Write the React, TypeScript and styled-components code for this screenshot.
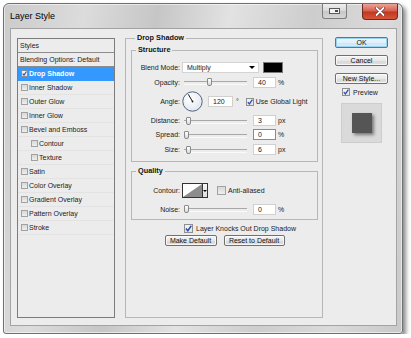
import styled, { createGlobalStyle } from 'styled-components';

const GlobalStyle = createGlobalStyle`
  html, body { margin: 0; padding: 0; background: #fff; }
  body {
    font-family: "Liberation Sans", Arial, sans-serif;
    font-size: 7px;
    color: #1b1b1b;
  }
  * { box-sizing: border-box; }
`;

const styleItems = [
  { label: 'Drop Shadow', checked: true, selected: true },
  { label: 'Inner Shadow' },
  { label: 'Outer Glow' },
  { label: 'Inner Glow' },
  { label: 'Bevel and Emboss' },
  { label: 'Contour', indent: true },
  { label: 'Texture', indent: true },
  { label: 'Satin' },
  { label: 'Color Overlay' },
  { label: 'Gradient Overlay' },
  { label: 'Pattern Overlay' },
  { label: 'Stroke' },
];

function Check({ checked, size = 8 }: { checked?: boolean; size?: number }) {
  return (
    <S.CheckBox $size={size} $checked={checked}>
      {checked && (
        <svg width={size - 2} height={size - 2} viewBox="0 0 6 6">
          <path d="M0.8 3.1 L2.4 4.9 L5.4 0.6" fill="none" stroke="#2b4fae" strokeWidth="1.3" />
        </svg>
      )}
    </S.CheckBox>
  );
}

function Slider({ pos }: { pos: number }) {
  return (
    <S.Slider>
      <S.Thumb style={{ left: pos }} />
    </S.Slider>
  );
}

function Dial() {
  return (
    <svg width="21" height="21" viewBox="0 0 21 21">
      <defs>
        <radialGradient id="dialBg" cx="0.4" cy="0.35" r="0.7">
          <stop offset="0" stopColor="#ffffff" />
          <stop offset="1" stopColor="#e1e7ef" />
        </radialGradient>
      </defs>
      <circle cx="10.5" cy="10.5" r="9.7" fill="url(#dialBg)" stroke="#53627f" strokeWidth="1" />
      <line x1="10.5" y1="10.5" x2="6.3" y2="3.3" stroke="#1a1a1a" strokeWidth="1" />
      <circle cx="10.5" cy="10.5" r="0.9" fill="#1a1a1a" />
    </svg>
  );
}

export default function App() {
  return (
    <>
      <GlobalStyle />
      <S.Window>
        <S.TitleBar>
          <S.Title>Layer Style</S.Title>
          <S.MinButton>
            <svg width="11" height="6" viewBox="0 0 11 6">
              <rect x="0.5" y="0.5" width="10" height="5" fill="#f4f4f4" stroke="#5a5a5a" />
              <rect x="6" y="2" width="3" height="2" fill="#4a4a4a" />
            </svg>
          </S.MinButton>
          <S.CloseButton>
            <svg width="10" height="9" viewBox="0 0 10 9">
              <path d="M1.5 1 L8.5 8 M8.5 1 L1.5 8" stroke="#5c1d14" strokeWidth="3" strokeLinecap="round" />
              <path d="M1.5 1 L8.5 8 M8.5 1 L1.5 8" stroke="#ffffff" strokeWidth="1.8" strokeLinecap="round" />
            </svg>
          </S.CloseButton>
        </S.TitleBar>

        <S.Client>
          <S.StylesList>
            <S.ListHeader>Styles</S.ListHeader>
            <S.ListHeader>Blending Options: Default</S.ListHeader>
            {styleItems.map((item) => (
              <S.ListRow key={item.label} $selected={item.selected} $indent={item.indent}>
                <Check checked={item.checked} size={7} />
                <span>{item.label}</span>
              </S.ListRow>
            ))}
          </S.StylesList>

          <S.GroupBox $pad="0 4px 0 5px" $top={-5}>
            <S.Legend>Drop Shadow</S.Legend>
            <S.GroupBox $pad="6px 0 3px 0" $top={2}>
              <S.Legend>Structure</S.Legend>
              <S.Row $h={13}>
                <S.Label>Blend Mode:</S.Label>
                <S.Select>
                  <span>Multiply</span>
                  <S.Arrow />
                </S.Select>
                <S.Swatch />
              </S.Row>
              <S.Row $h={16}>
                <S.Label>Opacity:</S.Label>
                <Slider pos={23} />
                <S.NumBox>40</S.NumBox>
                <S.Unit>%</S.Unit>
              </S.Row>
              <S.Row $h={23}>
                <S.Label>Angle:</S.Label>
                <S.DialWrap>
                  <Dial />
                </S.DialWrap>
                <S.NumBox $w={25} $gap={5}>120</S.NumBox>
                <S.Unit $gap={3}>°</S.Unit>
                <S.CheckLabel $gap={7}>
                  <Check checked />
                  <span>Use Global Light</span>
                </S.CheckLabel>
              </S.Row>
              <S.Row $h={15}>
                <S.Label>Distance:</S.Label>
                <Slider pos={2} />
                <S.NumBox>3</S.NumBox>
                <S.Unit>px</S.Unit>
              </S.Row>
              <S.Row $h={13}>
                <S.Label>Spread:</S.Label>
                <Slider pos={0} />
                <S.NumBox $focus>0</S.NumBox>
                <S.Unit>%</S.Unit>
              </S.Row>
              <S.Row $h={17}>
                <S.Label>Size:</S.Label>
                <Slider pos={2} />
                <S.NumBox>6</S.NumBox>
                <S.Unit>px</S.Unit>
              </S.Row>
            </S.GroupBox>

            <S.GroupBox $pad="5px 0 1px 0" $top={4}>
              <S.Legend>Quality</S.Legend>
              <S.Row $h={19}>
                <S.Label>Contour:</S.Label>
                <S.ContourPicker>
                  <svg width="19" height="13" viewBox="0 0 19 13">
                    <rect width="19" height="13" fill="#ffffff" />
                    <polygon points="0,13 19,0 19,13" fill="#8c8c8c" />
                  </svg>
                  <S.ContourDrop>
                    <S.Arrow $small />
                  </S.ContourDrop>
                </S.ContourPicker>
                <S.CheckLabel $gap={9}>
                  <Check size={9} />
                  <span>Anti-aliased</span>
                </S.CheckLabel>
              </S.Row>
              <S.Row $h={18}>
                <S.Label>Noise:</S.Label>
                <Slider pos={0} />
                <S.NumBox>0</S.NumBox>
                <S.Unit>%</S.Unit>
              </S.Row>
            </S.GroupBox>

            <S.KnockRow>
              <Check checked size={9} />
              <span>Layer Knocks Out Drop Shadow</span>
            </S.KnockRow>
            <S.ButtonRow>
              <S.Button $w={52}>Make Default</S.Button>
              <S.Button $w={61}>Reset to Default</S.Button>
            </S.ButtonRow>
          </S.GroupBox>

          <S.SideColumn>
            <S.Button $primary>OK</S.Button>
            <S.Button>Cancel</S.Button>
            <S.Button>New Style...</S.Button>
            <S.PreviewRow>
              <Check checked />
              <span>Preview</span>
            </S.PreviewRow>
            <S.PreviewBox>
              <S.PreviewSquare />
            </S.PreviewBox>
          </S.SideColumn>
        </S.Client>
      </S.Window>
    </>
  );
}

namespace S {
  export const Window = styled.div`
    margin: 3px 0 0 3px;
    width: 400px;
    height: 331px;
    border: 1px solid #707070;
    border-radius: 6px 6px 3px 3px;
    background: linear-gradient(100deg, #cbcbcb 0%, #dcdcdc 18%, #c6c6c6 34%, #e2e2e2 50%, #cdcdcd 68%, #dadada 84%, #c9c9c9 100%);
    box-shadow: 3px 3px 4px rgba(0, 0, 0, 0.45), inset 0 0 0 1px rgba(255, 255, 255, 0.55);
    padding: 0 5px 7px 6px;
    display: flex;
    flex-direction: column;
  `;

  export const TitleBar = styled.div`
    height: 24px;
    display: flex;
    align-items: flex-start;
    flex-shrink: 0;
  `;

  export const Title = styled.div`
    flex: 1;
    margin-top: 7px;
    font-size: 9px;
    line-height: 11px;
    color: #000;
  `;

  export const MinButton = styled.div`
    width: 25px;
    height: 15px;
    margin-right: 15px;
    border: 1px solid #7d7d7d;
    border-top: none;
    border-radius: 0 0 3px 3px;
    background: linear-gradient(#eeeeee, #d8d8d8 50%, #c7c7c7 51%, #d6d6d6);
    display: flex;
    align-items: center;
    justify-content: center;
  `;

  export const CloseButton = styled.div`
    width: 36px;
    height: 16px;
    margin-right: -1px;
    border: 1px solid #6b2a22;
    border-top: none;
    border-radius: 0 0 4px 4px;
    background: linear-gradient(#e9a597, #d7614f 45%, #c3371f 55%, #d7553d);
    display: flex;
    align-items: center;
    justify-content: center;
  `;

  export const Client = styled.div`
    flex: 1;
    background: #ececec;
    border: 1px solid #a3a3a3;
    padding: 9px 6px 7px 6px;
    display: grid;
    grid-template-columns: 98px 198px 55px;
    column-gap: 10px;
  `;

  export const StylesList = styled.div`
    border: 1px solid #7c7c7c;
    background: #ececec;
    display: flex;
    flex-direction: column;
  `;

  export const ListHeader = styled.div`
    height: 14px;
    line-height: 13px;
    padding-left: 2px;
    border-bottom: 1px solid #8c8c8c;
    color: #1b1b1b;
    white-space: nowrap;
  `;

  export const ListRow = styled.div<{ $selected?: boolean; $indent?: boolean }>`
    height: 14px;
    display: flex;
    align-items: center;
    gap: 1px;
    padding-left: ${(p) => (p.$indent ? 13 : 3)}px;
    border-bottom: 1px solid ${(p) => (p.$selected ? '#3399ff' : '#e3e3e3')};
    background: ${(p) => (p.$selected ? '#3399ff' : 'transparent')};
    color: ${(p) => (p.$selected ? '#fff' : '#1b1b1b')};
    font-weight: ${(p) => (p.$selected ? 'bold' : 'normal')};
    white-space: nowrap;
  `;

  export const CheckBox = styled.span<{ $size: number; $checked?: boolean }>`
    width: ${(p) => p.$size}px;
    height: ${(p) => p.$size}px;
    flex-shrink: 0;
    border: 1px solid ${(p) => (p.$checked ? '#8e8f8f' : '#a2a2a2')};
    background: ${(p) => (p.$checked ? 'linear-gradient(#f4f4f4, #e2e2e2)' : 'linear-gradient(#d8d8d8, #eeeeee)')};
    display: flex;
    align-items: center;
    justify-content: center;
  `;

  export const GroupBox = styled.fieldset<{ $pad: string; $top: number }>`
    margin: ${(p) => p.$top}px 0 0 0;
    min-width: 0;
    border: 1px solid #b7b7b7;
    padding: ${(p) => p.$pad};
    display: flex;
    flex-direction: column;
  `;

  export const Legend = styled.legend`
    font-weight: bold;
    font-size: 7.3px;
    line-height: 10px;
    padding: 0 2px;
    margin-left: 4px;
    color: #111;
  `;

  export const Row = styled.div<{ $h: number }>`
    height: ${(p) => p.$h}px;
    display: flex;
    align-items: center;
    white-space: nowrap;
  `;

  export const Label = styled.div`
    width: 48px;
    flex-shrink: 0;
    text-align: right;
    margin-right: 2px;
  `;

  export const Select = styled.div`
    width: 77px;
    height: 11px;
    background: #fff;
    border: 1px solid #d4d4d4;
    padding: 0 3px 0 4px;
    display: flex;
    align-items: center;
    justify-content: space-between;
  `;

  export const Arrow = styled.span<{ $small?: boolean }>`
    width: 0;
    height: 0;
    border-left: ${(p) => (p.$small ? 2 : 3)}px solid transparent;
    border-right: ${(p) => (p.$small ? 2 : 3)}px solid transparent;
    border-top: ${(p) => (p.$small ? 2 : 3)}px solid #000;
  `;

  export const Swatch = styled.div`
    width: 20px;
    height: 11px;
    margin-left: 4px;
    background: #000;
    border: 1px solid #7a7a7a;
  `;

  export const Slider = styled.div`
    position: relative;
    width: 63px;
    height: 8px;
    margin-left: 2px;
    flex-shrink: 0;

    &::before {
      content: '';
      position: absolute;
      left: 0;
      right: 0;
      top: 3px;
      height: 2px;
      border-top: 1px solid #a8a8a8;
      border-bottom: 1px solid #fafafa;
    }
  `;

  export const Thumb = styled.span`
    position: absolute;
    top: 0;
    width: 5px;
    height: 8px;
    border: 1px solid #8a8a8a;
    border-radius: 1px 1px 2px 2px;
    background: linear-gradient(#ffffff, #d9d9d9);
  `;

  export const NumBox = styled.div<{ $w?: number; $gap?: number; $focus?: boolean }>`
    width: ${(p) => p.$w ?? 23}px;
    height: 11px;
    margin-left: ${(p) => p.$gap ?? 6}px;
    background: #fff;
    border: 1px solid ${(p) => (p.$focus ? '#4a9be0' : '#d0d0d0')};
    padding-left: 4px;
    line-height: 9px;
  `;

  export const Unit = styled.span<{ $gap?: number }>`
    margin-left: ${(p) => p.$gap ?? 2}px;
  `;

  export const DialWrap = styled.div`
    width: 21px;
    height: 21px;
    display: flex;
  `;

  export const CheckLabel = styled.div<{ $gap: number }>`
    display: flex;
    align-items: center;
    gap: 2px;
    margin-left: ${(p) => p.$gap}px;
  `;

  export const ContourPicker = styled.div`
    width: 26px;
    height: 15px;
    border: 1px solid #333;
    display: flex;
    background: #fff;
  `;

  export const ContourDrop = styled.div`
    flex: 1;
    border-left: 1px solid #333;
    background: linear-gradient(#f7f7f7, #dedede);
    display: flex;
    align-items: center;
    justify-content: center;
  `;

  export const KnockRow = styled.div`
    height: 12px;
    margin-top: 2px;
    padding-left: 53px;
    display: flex;
    align-items: center;
    gap: 3px;
    white-space: nowrap;
  `;

  export const ButtonRow = styled.div`
    margin-top: 1px;
    display: flex;
    justify-content: center;
    gap: 7px;
  `;

  export const Button = styled.div<{ $w?: number; $primary?: boolean }>`
    width: ${(p) => (p.$w ? `${p.$w}px` : '100%')};
    height: 11px;
    border: 1px solid ${(p) => (p.$primary ? '#3c7fb1' : '#707070')};
    border-radius: 2px;
    background: ${(p) =>
      p.$primary
        ? 'linear-gradient(#eef7fd, #e0eff9 50%, #cde6f6 51%, #d8ecf8)'
        : 'linear-gradient(#f4f4f4, #e8e8e8 50%, #d9d9d9 51%, #dfdfdf)'};
    box-shadow: inset 0 0 0 1px ${(p) => (p.$primary ? '#9ad3f2' : 'rgba(255,255,255,0.7)')};
    display: flex;
    align-items: center;
    justify-content: center;
    white-space: nowrap;
    color: #111;
  `;

  export const SideColumn = styled.div`
    margin: -1px 0 0 2px;
    display: flex;
    flex-direction: column;
    gap: 7px;
  `;

  export const PreviewRow = styled.div`
    height: 8px;
    margin-top: -3px;
    padding-left: 7px;
    display: flex;
    align-items: center;
    gap: 3px;
  `;

  export const PreviewBox = styled.div`
    width: 41px;
    height: 40px;
    margin: 0 0 0 6px;
    background: #dadada;
    border: 1px solid #cdcdcd;
    display: flex;
    align-items: center;
    justify-content: center;
  `;

  export const PreviewSquare = styled.div`
    width: 20px;
    height: 20px;
    background: #555555;
    box-shadow: 2px 2px 3px rgba(0, 0, 0, 0.45);
  `;
}
